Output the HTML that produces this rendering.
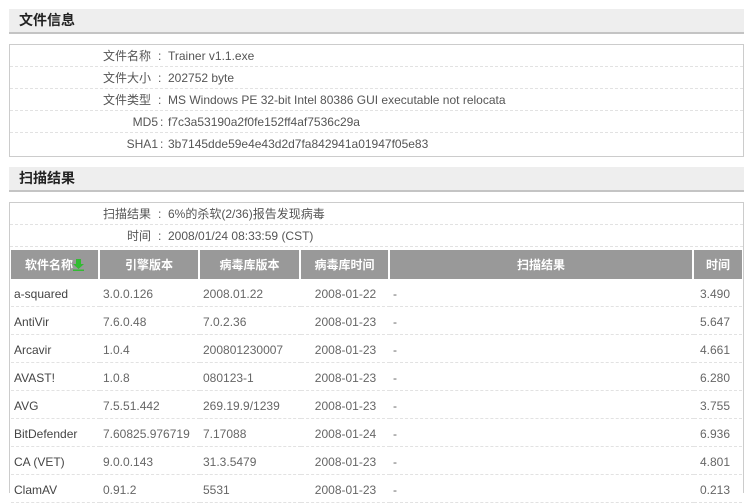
<!DOCTYPE html><html><head><meta charset="utf-8"><style>
*{margin:0;padding:0;box-sizing:border-box}
body{width:750px;height:493px;overflow:hidden;background:#fff;font-family:"Liberation Sans","Noto Sans CJK SC",sans-serif;font-size:12px;color:#555;position:relative}
.h{position:absolute;left:9px;width:735px;height:25px;background:#eee;border-bottom:2px solid #c4c4c4;font-weight:bold;font-size:14px;color:#222;padding-left:10px;line-height:23px}
.box{position:absolute;left:9px;width:735px;border:1px solid #ccc;border-bottom:none}
.r{height:22px;line-height:22px;border-bottom:1px dashed #e2e2e2;position:relative}
.r .l{position:absolute;right:592px;text-align:right}
.r .c{position:absolute;left:148px}
.r .v{position:absolute;left:158px}
table{position:absolute;left:11px;top:250px;width:731px;border-collapse:separate;border-spacing:0}
th{background:#999;color:#fff;font-weight:bold;height:29px;border-right:2px solid #fff;text-align:center;font-size:12px}
td{height:28px;border-bottom:1px dashed #e2e2e2;color:#666;white-space:nowrap;padding-top:2px}
td:first-child{color:#444;padding-left:3px}
</style></head><body>
<div class="h" style="top:9px">文件信息</div>
<div class="box" style="top:44px;height:113px;border-bottom:1px solid #ccc">
<div class="r"><span class="l">文件名称</span><span class="c">:</span><span class="v">Trainer v1.1.exe</span></div>
<div class="r"><span class="l">文件大小</span><span class="c">:</span><span class="v">202752 byte</span></div>
<div class="r"><span class="l">文件类型</span><span class="c">:</span><span class="v">MS Windows PE 32-bit Intel 80386 GUI executable not relocata</span></div>
<div class="r"><span class="l" style="right:585px">MD5</span><span class="c" style="left:150px">:</span><span class="v">f7c3a53190a2f0fe152ff4af7536c29a</span></div>
<div class="r" style="border:none"><span class="l" style="right:585px">SHA1</span><span class="c" style="left:150px">:</span><span class="v">3b7145dde59e4e43d2d7fa842941a01947f05e83</span></div>
</div>
<div class="h" style="top:167px">扫描结果</div>
<div class="box" style="top:202px;height:291px">
<div class="r"><span class="l">扫描结果</span><span class="c">:</span><span class="v">6%的杀软(2/36)报告发现病毒</span></div>
<div class="r"><span class="l">时间</span><span class="c">:</span><span class="v">2008/01/24 08:33:59 (CST)</span></div>
</div>
<table>
<tr><th style="width:89px">软件名称<svg width="11" height="12" viewBox="0 0 11 12" style="vertical-align:-2px"><path d="M3 0h5v5h3L5.5 10 0 5h3z" fill="#3b3"/><rect x="0" y="10.5" width="11" height="1.5" fill="#3b3"/></svg></th><th style="width:100px">引擎版本</th><th style="width:101px">病毒库版本</th><th style="width:89px">病毒库时间</th><th style="width:304px">扫描结果</th><th style="border:none">时间</th></tr>
<tr><td>a-squared</td><td style="padding-left:3px">3.0.0.126</td><td style="padding-left:3px">2008.01.22</td><td style="text-align:center">2008-01-22</td><td style="padding-left:3px">-</td><td style="text-align:right;padding-right:12px">3.490</td></tr>
<tr><td>AntiVir</td><td style="padding-left:3px">7.6.0.48</td><td style="padding-left:3px">7.0.2.36</td><td style="text-align:center">2008-01-23</td><td style="padding-left:3px">-</td><td style="text-align:right;padding-right:12px">5.647</td></tr>
<tr><td>Arcavir</td><td style="padding-left:3px">1.0.4</td><td style="padding-left:3px">200801230007</td><td style="text-align:center">2008-01-23</td><td style="padding-left:3px">-</td><td style="text-align:right;padding-right:12px">4.661</td></tr>
<tr><td>AVAST!</td><td style="padding-left:3px">1.0.8</td><td style="padding-left:3px">080123-1</td><td style="text-align:center">2008-01-23</td><td style="padding-left:3px">-</td><td style="text-align:right;padding-right:12px">6.280</td></tr>
<tr><td>AVG</td><td style="padding-left:3px">7.5.51.442</td><td style="padding-left:3px">269.19.9/1239</td><td style="text-align:center">2008-01-23</td><td style="padding-left:3px">-</td><td style="text-align:right;padding-right:12px">3.755</td></tr>
<tr><td>BitDefender</td><td style="padding-left:3px">7.60825.976719</td><td style="padding-left:3px">7.17088</td><td style="text-align:center">2008-01-24</td><td style="padding-left:3px">-</td><td style="text-align:right;padding-right:12px">6.936</td></tr>
<tr><td>CA (VET)</td><td style="padding-left:3px">9.0.0.143</td><td style="padding-left:3px">31.3.5479</td><td style="text-align:center">2008-01-23</td><td style="padding-left:3px">-</td><td style="text-align:right;padding-right:12px">4.801</td></tr>
<tr><td>ClamAV</td><td style="padding-left:3px">0.91.2</td><td style="padding-left:3px">5531</td><td style="text-align:center">2008-01-23</td><td style="padding-left:3px">-</td><td style="text-align:right;padding-right:12px">0.213</td></tr>
</table>
</body></html>
